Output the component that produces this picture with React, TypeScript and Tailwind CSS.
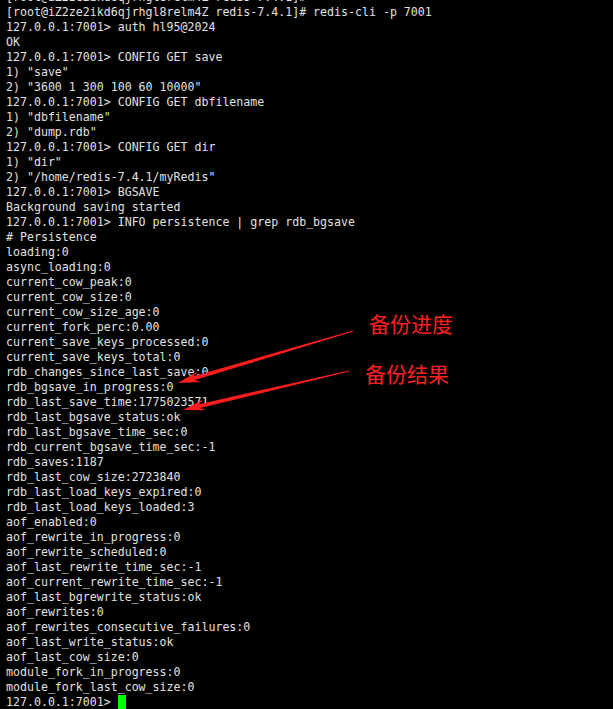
import React from "react";

const lines = [
  "[root@iZ2ze2ikd6qjrhgl8relm4Z redis-7.4.1]#",
  "[root@iZ2ze2ikd6qjrhgl8relm4Z redis-7.4.1]# redis-cli -p 7001",
  "127.0.0.1:7001> auth hl95@2024",
  "OK",
  "127.0.0.1:7001> CONFIG GET save",
  '1) "save"',
  '2) "3600 1 300 100 60 10000"',
  "127.0.0.1:7001> CONFIG GET dbfilename",
  '1) "dbfilename"',
  '2) "dump.rdb"',
  "127.0.0.1:7001> CONFIG GET dir",
  '1) "dir"',
  '2) "/home/redis-7.4.1/myRedis"',
  "127.0.0.1:7001> BGSAVE",
  "Background saving started",
  "127.0.0.1:7001> INFO persistence | grep rdb_bgsave",
  "# Persistence",
  "loading:0",
  "async_loading:0",
  "current_cow_peak:0",
  "current_cow_size:0",
  "current_cow_size_age:0",
  "current_fork_perc:0.00",
  "current_save_keys_processed:0",
  "current_save_keys_total:0",
  "rdb_changes_since_last_save:0",
  "rdb_bgsave_in_progress:0",
  "rdb_last_save_time:1775023571",
  "rdb_last_bgsave_status:ok",
  "rdb_last_bgsave_time_sec:0",
  "rdb_current_bgsave_time_sec:-1",
  "rdb_saves:1187",
  "rdb_last_cow_size:2723840",
  "rdb_last_load_keys_expired:0",
  "rdb_last_load_keys_loaded:3",
  "aof_enabled:0",
  "aof_rewrite_in_progress:0",
  "aof_rewrite_scheduled:0",
  "aof_last_rewrite_time_sec:-1",
  "aof_current_rewrite_time_sec:-1",
  "aof_last_bgrewrite_status:ok",
  "aof_rewrites:0",
  "aof_rewrites_consecutive_failures:0",
  "aof_last_write_status:ok",
  "aof_last_cow_size:0",
  "module_fork_in_progress:0",
  "module_fork_last_cow_size:0",
];

// tapered arrow: thin tail, thick near the head
function arrowPoints(tip: [number, number], tail: [number, number]) {
  const dx = tail[0] - tip[0];
  const dy = tail[1] - tip[1];
  const len = Math.hypot(dx, dy);
  const ux = dx / len, uy = dy / len;
  const nx = -uy, ny = ux;
  const at = (d: number, w: number) =>
    `${(tip[0] + ux * d + nx * w).toFixed(1)},${(tip[1] + uy * d + ny * w).toFixed(1)}`;
  return [
    at(0, 0),
    at(22, 5.5),
    at(17, 2),
    at(len, 0.6),
    at(len, -0.6),
    at(17, -2),
    at(22, -5.5),
  ].join(" ");
}

export default function App() {
  return (
    <div className="relative w-[613px] h-[709px] overflow-hidden bg-black">
      <div
        className="-mt-[10px] pl-[6px] text-[11.6px] leading-[15px] text-[#e0e0e0] whitespace-pre"
        style={{ fontFamily: '"DejaVu Sans Mono", "Liberation Mono", monospace' }}
      >
        {lines.map((l, i) => (
          <div key={i} className="h-[15px]">{l}</div>
        ))}
        <div className="h-[15px] flex items-start">
          <span>127.0.0.1:7001&gt; </span>
          <span className="inline-block w-[8px] h-[14px] bg-[#00ff00]" />
        </div>
      </div>

      <svg className="absolute left-0 top-0" width="613" height="709">
        <polygon points={arrowPoints([178, 383], [353, 331])} fill="#ff1c1c" />
        <polygon points={arrowPoints([183, 410], [349, 371])} fill="#ff1c1c" />
      </svg>

      <div
        className="absolute left-[369px] top-[309px] text-[21px] leading-[28px] text-[#ff2020]"
        style={{ fontFamily: '"Noto Sans CJK SC", sans-serif' }}
      >
        备份进度
      </div>
      <div
        className="absolute left-[365px] top-[359px] text-[21px] leading-[28px] text-[#ff2020]"
        style={{ fontFamily: '"Noto Sans CJK SC", sans-serif' }}
      >
        备份结果
      </div>
    </div>
  );
}
